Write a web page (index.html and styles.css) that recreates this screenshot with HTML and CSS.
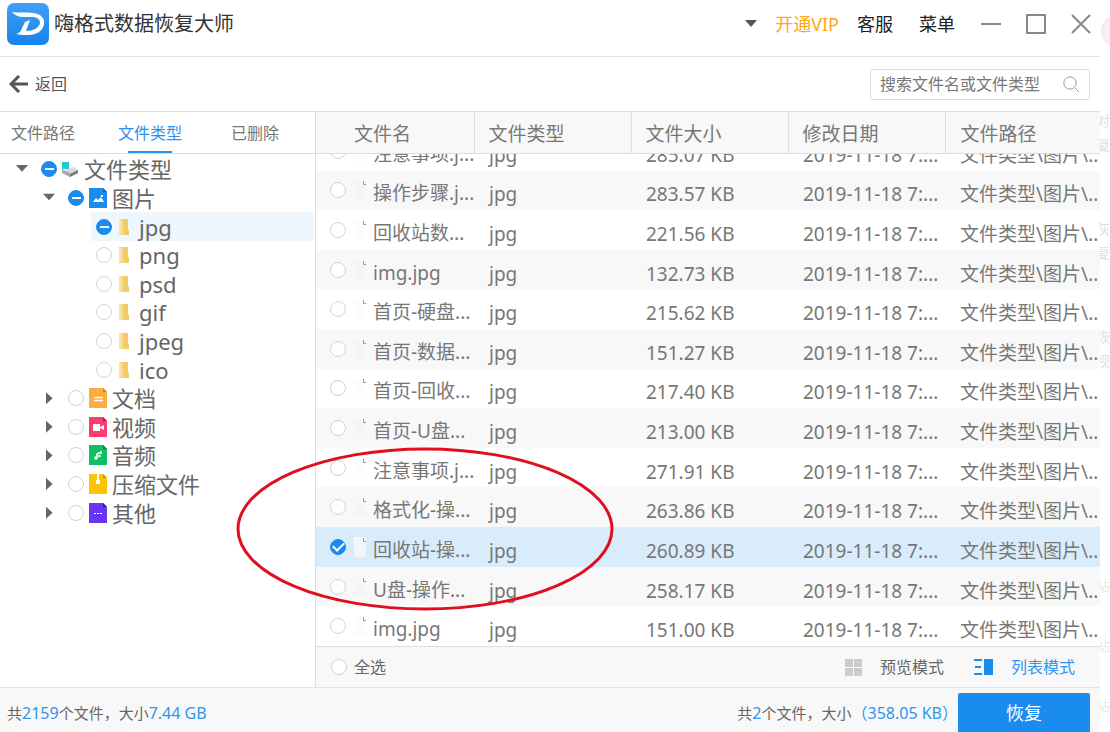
FILE: index.html
```html
<!DOCTYPE html>
<html lang="zh-CN">
<head>
<meta charset="utf-8">
<title>嗨格式数据恢复大师</title>
<link rel="stylesheet" href="styles.css">
</head>
<body>
<svg class="defs" width="0" height="0" aria-hidden="true">
  <symbol id="folder" viewBox="0 0 10 18"><path fill="#f6d982" d="M0 1h9v10l1 2v4H0z"/><path fill="#f0cb66" d="M4 1h5v10l1 2v4H5z"/><path fill="#fae7ad" d="M0 2h2v14H0z"/></symbol>
  <symbol id="file" viewBox="0 0 12 20"><path fill="#000" fill-opacity=".012" d="M0 1h8l4 4v15H0z"/><path fill="none" stroke="#999" d="M9.500 1v3.500h3"/></symbol>
</svg>
<div class="desktop">
<main class="window">
  <header class="titlebar">
    <svg class="logo" viewBox="0 0 42 42" aria-hidden="true"><defs><linearGradient id="lg" x1="0" y1="0" x2="0" y2="1"><stop offset="0" stop-color="#41a0f5"/><stop offset="1" stop-color="#1683ee"/></linearGradient></defs><rect width="42" height="42" rx="7" fill="url(#lg)"/><path fill="#fff" d="M5 9c6 1 14 0 21 1 8 1 12 5 11 11-1 7-8 11-15 11-5 0-9 0-13-1 4-1 5-3 6-6l3-6 5-2-4 11c7 0 13-3 14-8 0-5-4-6-9-6-7 0-14 1-19-5z"/></svg>
    <h1>嗨格式数据恢复大师</h1>
    <nav class="menu">
      <svg class="drop" viewBox="0 0 12 7" aria-hidden="true"><path fill="#555" d="M0 0h12L6 7z"/></svg>
      <button class="vip">开通VIP</button>
      <button>客服</button>
      <button>菜单</button>
    </nav>
    <div class="controls">
      <button aria-label="最小化"><svg viewBox="0 0 20 20"><path d="M0 10h20"/></svg></button>
      <button aria-label="最大化"><svg viewBox="0 0 20 20"><path d="M1 1h18v18H1z"/></svg></button>
      <button aria-label="关闭"><svg viewBox="0 0 20 20"><path d="M1 1l18 18M19 1L1 19"/></svg></button>
    </div>
  </header>
  <div class="toolbar">
    <button class="back"><svg viewBox="0 0 20 18" aria-hidden="true"><path d="M19 9H3M10 1L2 9l8 8"/></svg>返回</button>
    <label class="search"><input type="text" placeholder="搜索文件名或文件类型" aria-label="搜索文件名或文件类型"><svg viewBox="0 0 17 17" aria-hidden="true"><circle cx="7" cy="7" r="6.200"/><path d="M12 12l4 4"/></svg></label>
  </div>
  <div class="body">
    <aside class="side">
      <div class="tabs">
        <button>文件路径</button><button class="on">文件类型</button><button>已删除</button>
      </div>
      <ul class="tree">
        <li><i class="caret open"></i><label><input type="checkbox" class="part"><svg class="ico root" viewBox="0 0 17 16"><path fill="#29c4e0" d="M0 1h7v7H0z"/><path fill="#d9d9d9" d="M3 9l9-3 4 3v3l-8 4-5-4z"/><path fill="#aaa" d="M0 8l8 4v4l-8-4z"/><path fill="#777" d="M8 13l8-4v3l-8 4z"/></svg>文件类型</label></li>
        <li class="l1"><i class="caret open"></i><label><input type="checkbox" class="part"><svg class="ico" viewBox="0 0 18 20"><path fill="#1a8cf0" d="M0 0h14l4 4v16H0z"/><path fill="#0b62b8" d="M14 0l4 4h-4z"/><path fill="#fff" d="M4 14l3-4 2 2 3-3 3 5zM12 7h2v2h-2z"/></svg>图片</label></li>
        <li class="l2 sel"><label><input type="checkbox" class="part"><svg class="fold"><use href="#folder"/></svg>jpg</label></li>
        <li class="l2"><label><input type="checkbox"><svg class="fold"><use href="#folder"/></svg>png</label></li>
        <li class="l2"><label><input type="checkbox"><svg class="fold"><use href="#folder"/></svg>psd</label></li>
        <li class="l2"><label><input type="checkbox"><svg class="fold"><use href="#folder"/></svg>gif</label></li>
        <li class="l2"><label><input type="checkbox"><svg class="fold"><use href="#folder"/></svg>jpeg</label></li>
        <li class="l2"><label><input type="checkbox"><svg class="fold"><use href="#folder"/></svg>ico</label></li>
        <li class="l1"><i class="caret"></i><label><input type="checkbox"><svg class="ico" viewBox="0 0 18 20"><path fill="#ffab40" d="M0 0h14l4 4v16H0z"/><path fill="#e07f10" d="M14 0l4 4h-4z"/><path stroke="#fff" stroke-width="1.500" d="M5 9.500h9M5 12.500h9"/></svg>文档</label></li>
        <li class="l1"><i class="caret"></i><label><input type="checkbox"><svg class="ico" viewBox="0 0 18 20"><path fill="#fb3b72" d="M0 0h14l4 4v16H0z"/><path fill="#c0154a" d="M14 0l4 4h-4z"/><path fill="#fff" d="M4 7h7v7H4zM11 10l4-2v5l-4-2z"/></svg>视频</label></li>
        <li class="l1"><i class="caret"></i><label><input type="checkbox"><svg class="ico" viewBox="0 0 18 20"><path fill="#10bf61" d="M0 0h14l4 4v16H0z"/><path fill="#078040" d="M14 0l4 4h-4z"/><path fill="none" stroke="#fff" stroke-width="1.500" d="M8 13V9l4-2v2"/><circle cx="7" cy="13" r="1.800" fill="#fff"/><circle cx="10.500" cy="11" r="1.300" fill="#fff"/></svg>音频</label></li>
        <li class="l1"><i class="caret"></i><label><input type="checkbox"><svg class="ico" viewBox="0 0 18 20"><path fill="#fcc400" d="M0 0h14l4 4v16H0z"/><path fill="#c99500" d="M14 0l4 4h-4z"/><path fill="#fff" d="M8 0h2v6h1v4H7V6h1z"/></svg>压缩文件</label></li>
        <li class="l1"><i class="caret"></i><label><input type="checkbox"><svg class="ico" viewBox="0 0 18 20"><path fill="#6a35f2" d="M0 0h14l4 4v16H0z"/><path fill="#3a10a8" d="M14 0l4 4h-4z"/><path fill="#fff" d="M5 10h2v1H5zM8 10h2v1H8zM11 10h2v1h-2z"/></svg>其他</label></li>
      </ul>
    </aside>
    <section class="files">
      <table class="grid head">
        <colgroup><col class="c1"><col class="c2"><col class="c2"><col class="c2"><col></colgroup>
        <thead><tr><th>文件名</th><th>文件类型</th><th>文件大小</th><th>修改日期</th><th>文件路径</th></tr></thead>
      </table>
      <div class="scroll">
      <table class="grid rows">
        <colgroup><col class="c1"><col class="c2"><col class="c2"><col class="c2"><col></colgroup>
        <tbody>
        <tr><td><label><input type="checkbox"><svg class="doc"><use href="#file"/></svg><span>注意事项.j...</span></label></td><td>jpg</td><td>285.07 KB</td><td>2019-11-18 7:...</td><td>文件类型\图片\..</td></tr>
        <tr><td><label><input type="checkbox"><svg class="doc"><use href="#file"/></svg><span>操作步骤.j...</span></label></td><td>jpg</td><td>283.57 KB</td><td>2019-11-18 7:...</td><td>文件类型\图片\..</td></tr>
        <tr><td><label><input type="checkbox"><svg class="doc"><use href="#file"/></svg><span>回收站数...</span></label></td><td>jpg</td><td>221.56 KB</td><td>2019-11-18 7:...</td><td>文件类型\图片\..</td></tr>
        <tr><td><label><input type="checkbox"><svg class="doc"><use href="#file"/></svg><span>img.jpg</span></label></td><td>jpg</td><td>132.73 KB</td><td>2019-11-18 7:...</td><td>文件类型\图片\..</td></tr>
        <tr><td><label><input type="checkbox"><svg class="doc"><use href="#file"/></svg><span>首页-硬盘...</span></label></td><td>jpg</td><td>215.62 KB</td><td>2019-11-18 7:...</td><td>文件类型\图片\..</td></tr>
        <tr><td><label><input type="checkbox"><svg class="doc"><use href="#file"/></svg><span>首页-数据...</span></label></td><td>jpg</td><td>151.27 KB</td><td>2019-11-18 7:...</td><td>文件类型\图片\..</td></tr>
        <tr><td><label><input type="checkbox"><svg class="doc"><use href="#file"/></svg><span>首页-回收...</span></label></td><td>jpg</td><td>217.40 KB</td><td>2019-11-18 7:...</td><td>文件类型\图片\..</td></tr>
        <tr><td><label><input type="checkbox"><svg class="doc"><use href="#file"/></svg><span>首页-U盘...</span></label></td><td>jpg</td><td>213.00 KB</td><td>2019-11-18 7:...</td><td>文件类型\图片\..</td></tr>
        <tr><td><label><input type="checkbox"><svg class="doc"><use href="#file"/></svg><span>注意事项.j...</span></label></td><td>jpg</td><td>271.91 KB</td><td>2019-11-18 7:...</td><td>文件类型\图片\..</td></tr>
        <tr><td><label><input type="checkbox"><svg class="doc"><use href="#file"/></svg><span>格式化-操...</span></label></td><td>jpg</td><td>263.86 KB</td><td>2019-11-18 7:...</td><td>文件类型\图片\..</td></tr>
        <tr class="picked"><td><label><input type="checkbox" checked><svg class="doc"><use href="#file"/></svg><span>回收站-操...</span></label></td><td>jpg</td><td>260.89 KB</td><td>2019-11-18 7:...</td><td>文件类型\图片\..</td></tr>
        <tr><td><label><input type="checkbox"><svg class="doc"><use href="#file"/></svg><span>U盘-操作...</span></label></td><td>jpg</td><td>258.17 KB</td><td>2019-11-18 7:...</td><td>文件类型\图片\..</td></tr>
        <tr><td><label><input type="checkbox"><svg class="doc"><use href="#file"/></svg><span>img.jpg</span></label></td><td>jpg</td><td>151.00 KB</td><td>2019-11-18 7:...</td><td>文件类型\图片\..</td></tr>
        </tbody>
      </table>
      </div>
      <div class="viewbar">
        <label class="all"><input type="checkbox">全选</label>
        <button class="mode"><svg class="tiles" viewBox="0 0 17 17" aria-hidden="true"><path fill="#ccc" d="M0 0h8v8H0zM9 0h8v8H9zM0 9h8v8H0zM9 9h8v8H9z"/></svg>预览模式</button>
        <button class="mode active"><svg viewBox="0 0 19 16" aria-hidden="true"><path fill="#1a8cf0" d="M0 0h8v2H0zM1 7h6v2H1zM0 14h8v2H0zM10 0h9v16h-9z"/></svg>列表模式</button>
      </div>
    </section>
  </div>
  <footer class="status">
    <p>共<b>2159</b>个文件，大小<b>7.44 GB</b></p>
    <p class="chosen">共<b>2</b>个文件，大小<b>（358.05 KB）</b></p>
    <button class="recover">恢复</button>
  </footer>
</main>
<aside class="behind" aria-hidden="true">
  <i class="avatar"></i>
  <span class="g1">对</span><span>复</span><span class="g2">灰</span><span>复</span><span class="g3">恢</span><span>视</span>
  <span class="g4 green">站</span><span class="g5 green">站</span><span class="g5 green">站</span>
</aside>
</div>
<svg class="mark" viewBox="0 0 380 166" aria-hidden="true"><ellipse cx="190" cy="83" rx="187" ry="80"/></svg>
</body>
</html>
```
FILE: styles.css
```css
* { box-sizing: border-box; }
body {
  margin: 0;
  position: relative;
  background: #fff;
  color: #666;
  font: 16px/24px "Noto Sans", "Noto Sans CJK SC", sans-serif;
}
button { border: 0; padding: 0; background: none; color: inherit; font: inherit; cursor: pointer; }
h1, p, ul { margin: 0; padding: 0; font-weight: 400; }
b { font-weight: 400; font-size: 16px; color: #3095ee; }
svg { flex: none; display: block; }
.defs { position: absolute; }
.desktop { display: flex; height: 100vh; overflow: hidden; }
.window { flex: 1; min-width: 0; display: flex; flex-direction: column; }

/* title bar */
.titlebar { display: flex; align-items: center; height: 57px; padding: 0 9px 9px 7px; border-bottom: 1px solid #e0e0e0; }
.logo { width: 42px; height: 42px; }
.titlebar h1 { margin-left: 5px; font-size: 20px; color: #333; }
.menu { display: flex; align-items: center; gap: 18px; margin-left: auto; font-size: 18px; color: #222; }
.menu button + button + button { margin-left: 8px; }
.drop { width: 12px; height: 7px; }
.menu .vip { color: #ffa61a; }
.controls { display: flex; gap: 25px; margin-left: 26px; }
.controls svg { width: 20px; height: 20px; fill: none; stroke: #888; stroke-width: 2; }

/* toolbar */
.toolbar { display: flex; align-items: center; justify-content: space-between; height: 55px; padding: 0 10px 0 9px; border-bottom: 1px solid #ddd; }
.back { display: flex; align-items: center; gap: 6px; color: #555; }
.back svg { width: 20px; height: 18px; fill: none; stroke: #555; stroke-width: 3; }
.search { display: flex; align-items: center; width: 220px; height: 31px; padding: 0 9px; border: 1px solid #ddd; border-radius: 2px; }
.search input { flex: 1; min-width: 0; border: 0; padding: 0; outline: 0; background: none; font: inherit; }
.search input::placeholder { color: #777; opacity: 1; }
.search svg { width: 17px; height: 17px; fill: none; stroke: #999; }

.body { flex: 1; min-height: 0; display: flex; }

/* tree panel */
.side { flex: none; width: 316px; border-right: 1px solid #ddd; }
.tabs { display: flex; gap: 43px; height: 42px; padding-left: 11px; border-bottom: 1px solid #ddd; }
.tabs button { color: #777; }
.tabs button:last-child { margin-left: 6px; }
.tabs .on { color: #2a90f0; background: linear-gradient(#2a90e8, #2a90e8) center bottom / 44px 2px no-repeat; }
.tree { display: grid; grid-auto-rows: 1fr; height: 372px; margin-top: 1px; list-style: none; font-size: 22px; line-height: 28px; }
.tree li { display: flex; align-items: center; padding-left: 16px; }
.tree .l1 { padding-left: 43px; }
.tree .l2 { padding-left: 5px; margin: 0 1px 0 91px; }
.tree .sel { background: #eef6fe; }
.tree label { display: flex; align-items: center; }
.caret { width: 12px; height: 12px; margin-right: 13px; background: #666; clip-path: polygon(25% 0, 80% 50%, 25% 100%); }
.caret.open { clip-path: polygon(0 15%, 100% 15%, 50% 70%); }
.ico { width: 18px; height: 20px; margin: 0 5px; }
.ico.root { width: 17px; height: 16px; }
.fold { width: 10px; height: 18px; margin: 0 10px 0 7px; }

input[type="checkbox"] {
  appearance: none; flex: none; display: grid; place-items: center;
  width: 16px; height: 16px; margin: 0; border: 1px solid #d4d4d4; border-radius: 50%; background: #fff;
}
input[type="checkbox"].part { border-color: #1a8cf0; background: linear-gradient(#fff, #fff) center / 9px 2px no-repeat #1a8cf0; }
input[type="checkbox"]:checked { border-color: #1a8cf0; background: #1a8cf0; }
input:checked::after { content: ""; width: 9px; height: 5px; margin-bottom: 3px; border: solid #fff; border-width: 0 0 2px 2px; transform: rotate(-45deg); }

/* file list */
.files { flex: 1; min-width: 0; display: flex; flex-direction: column; }
.grid { width: 100%; table-layout: fixed; border-collapse: collapse; font-size: 19px; white-space: nowrap; }
.c1 { width: 158px; }
.c2 { width: 157px; }
.head { height: 42px; }
.head th { padding: 3px 0 0 14px; text-align: left; font-weight: 400; color: #777; background: #f8f8f8; border-bottom: 1px solid #ddd; border-right: 1px solid #e0e0e0; }
.head th:first-child { padding-left: 38px; }
.head th:last-child { border-right: 0; padding-left: 15px; }
.scroll { flex: 1; min-height: 0; overflow: hidden; display: flex; flex-direction: column; justify-content: flex-end; }
.rows { flex: none; height: 515px; }
.rows tr:nth-child(even) { background: #f8f8f8; }
.rows tr.picked { background: #d9ecfb; }
.rows td { padding: 8px 0 0 15px; overflow: hidden; color: #777; }
.rows td:first-child { padding: 0 0 0 14px; }
.rows label { display: flex; align-items: center; }
.rows label span { padding-top: 6px; }
.rows .doc { width: 12px; height: 20px; margin: 0 7px 0 8px; }
.picked .doc { background: #f5f9fd; }
.viewbar { display: flex; align-items: center; height: 41px; padding: 0 25px 0 15px; border-top: 1px solid #ddd; background: #f8f8f8; }
.all { display: flex; align-items: center; gap: 7px; margin-right: auto; }
.mode { display: flex; align-items: center; gap: 18px; margin-left: 30px; }
.mode svg { width: 19px; height: 16px; }
.mode .tiles { width: 17px; height: 17px; }
.active { color: #3095ee; }

/* status bar */
.status { display: flex; align-items: center; height: 45px; padding: 5px 10px 0 7px; border-top: 1px solid #e4e4e4; background: #f8f8f8; font-size: 15px; }
.chosen { margin-left: auto; }
.recover { align-self: stretch; width: 132px; border-radius: 2px 2px 0 0; background: #1a8cf0; color: #fff; font-size: 18px; }

/* page showing behind the window */
.behind { flex: none; width: 10px; overflow: hidden; display: flex; flex-direction: column; color: #ddd; font-size: 14px; line-height: 24px; }
.behind span { margin-left: -4px; }
.avatar { flex: none; width: 30px; height: 30px; margin: 16px 0 0 1px; border: 2px solid #e3eef8; border-radius: 50%; background: #fdf0ea; }
.g1 { margin-top: 63px; }
.g2 { margin-top: 60px; }
.g3 { margin-top: 60px; }
.g4 { margin-top: 201px; }
.g5 { margin-top: 36px; }
.green { color: #d8f3df; }

.mark { position: absolute; left: 235px; top: 446px; width: 380px; height: 166px; fill: none; stroke: #e00f20; stroke-width: 3; pointer-events: none; }
```
